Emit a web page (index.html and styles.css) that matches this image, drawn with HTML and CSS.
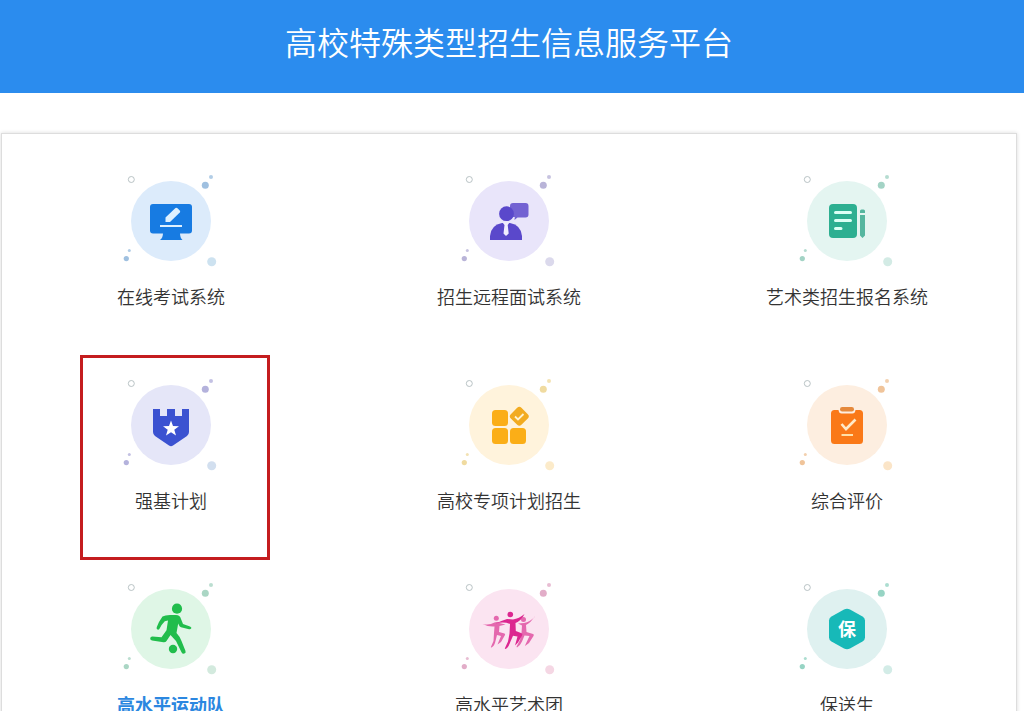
FILE: index.html
```html
<!DOCTYPE html>
<html lang="zh-CN">
<head>
    <meta charset="UTF-8">
    <meta name="viewport" content="width=device-width, initial-scale=1.0">
    <title>高校特殊类型招生信息服务平台</title>
    <link rel="stylesheet" href="styles.css">
</head>
<body>
    <svg class="defs" width="0" height="0" aria-hidden="true">
        <!-- small dots around every icon -->
        <symbol id="dots" viewBox="0 0 100 100">
            <circle cx="10.3" cy="8.5" r="3" fill="none" stroke="#a9b5b8" stroke-width="1" opacity=".8"/>
            <circle cx="84.3" cy="14.3" r="3.5" fill="currentColor"/>
            <circle cx="90" cy="6" r="2" fill="currentColor" opacity=".8"/>
            <circle cx="8.3" cy="79.5" r="1.5" fill="currentColor" opacity=".8"/>
            <circle cx="5.3" cy="87.6" r="2.6" fill="currentColor"/>
        </symbol>
    </svg>

    <header class="header">
        <h1>高校特殊类型招生信息服务平台</h1>
    </header>

    <main class="card">
        <a class="item" href="#">
            <svg class="icon blue" viewBox="0 0 100 100" aria-hidden="true">
                <use href="#dots"/>
                <circle cx="90.7" cy="90.7" r="4.5" fill="#cde2f0"/>
                <circle cx="50" cy="50" r="40" fill="#dcebfb"/>
                <rect x="29" y="33" width="42" height="29.5" rx="3" fill="#177be2"/>
                <path d="M42 62h17q0 5 2.5 7H39q3-2 3-7z" fill="#177be2"/>
                <path d="M39 55h22" stroke="#dff1ff" stroke-width="2"/>
                <path d="M44.5 46.500l10-9.500q1-.7 2 .2l2.200 2.200q1 1 .1 2L49 51h-4.500z" fill="#dff1ff"/>
            </svg>
            <span class="name">在线考试系统</span>
        </a>
        <a class="item" href="#">
            <svg class="icon violet" viewBox="0 0 100 100" aria-hidden="true">
                <use href="#dots"/>
                <circle cx="90.7" cy="90.7" r="4.5" fill="#dbd9ec"/>
                <circle cx="50" cy="50" r="40" fill="#e9e5fa"/>
                <path d="M54 32h12.500q3 0 3 3v8.500q0 3-3 3h-8l-3 2.500.3-3H51V35q0-3 3-3z" fill="#7362d2"/>
                <circle cx="47.5" cy="42.7" r="7.4" fill="#5a48cb"/>
                <path d="M31 69v-4q1-11 12-13h8q11 2 12 13v4z" fill="#5a48cb"/>
                <path d="M43.5 51.500h7L48.700 54l1 8.500L47 65l-2.500-2.500 1-8.500z" fill="#f1edff"/>
            </svg>
            <span class="name">招生远程面试系统</span>
        </a>
        <a class="item" href="#">
            <svg class="icon green" viewBox="0 0 100 100" aria-hidden="true">
                <use href="#dots"/>
                <circle cx="90.7" cy="90.7" r="4.5" fill="#d3ebe5"/>
                <circle cx="50" cy="50" r="40" fill="#e4f5f1"/>
                <rect x="32" y="33" width="28" height="34" rx="4" fill="#2daf91"/>
                <path d="M38.5 41.500h15M38.500 49.500h15M38.500 57.500h5.500" stroke="#dcfff5" stroke-width="3" stroke-linecap="round"/>
                <path d="M63 42v-2q0-1.500 1.500-1.500h2q1.500 0 1.500 1.500v2zM63 44h5v20.500L65.500 67 63 64.500z" fill="#55b69f"/>
            </svg>
            <span class="name">艺术类招生报名系统</span>
        </a>

        <a class="item marked" href="#">
            <svg class="icon indigo" viewBox="0 0 100 100" aria-hidden="true">
                <use href="#dots"/>
                <circle cx="90.7" cy="90.7" r="4.5" fill="#d2dfef"/>
                <circle cx="50" cy="50" r="40" fill="#e5e6f8"/>
                <path d="M32 34h7v7h7v-7h8v7h7v-7h7v23q0 2.500-2 4L52 70.500q-2 1.500-4 0L34 61q-2-1.500-2-4z" fill="#3b52d1"/>
                <path d="M50 45.500l2 5.500 6 .2-4.700 3.600 1.700 5.700-5-3.300-5 3.300 1.700-5.700L42 51.200l6-.2z" fill="#fff"/>
            </svg>
            <span class="name">强基计划</span>
        </a>
        <a class="item" href="#">
            <svg class="icon yellow" viewBox="0 0 100 100" aria-hidden="true">
                <use href="#dots"/>
                <circle cx="90.7" cy="90.7" r="4.5" fill="#fcebca"/>
                <circle cx="50" cy="50" r="40" fill="#fff3dc"/>
                <g fill="#fbae17">
                    <rect x="33" y="35" width="16" height="16" rx="3.5"/>
                    <rect x="33" y="53" width="16" height="16" rx="3.5"/>
                    <rect x="51" y="53" width="16" height="16" rx="3.5"/>
                    <rect x="52.8" y="33.8" width="15" height="15" rx="3" transform="rotate(45 60.3 41.3)" fill="#f2ab20"/>
                </g>
                <path d="M56 41.500l3 3 5.500-5.500" fill="none" stroke="#fff3d0" stroke-width="1.8"/>
            </svg>
            <span class="name">高校专项计划招生</span>
        </a>
        <a class="item" href="#">
            <svg class="icon orange" viewBox="0 0 100 100" aria-hidden="true">
                <use href="#dots"/>
                <circle cx="90.7" cy="90.7" r="4.5" fill="#fbe5c8"/>
                <circle cx="50" cy="50" r="40" fill="#fdeee0"/>
                <path d="M37.5 35h4q.5 3.500 3 3.500h11q2.500 0 3-3.500h4q3.500 0 3.500 3.500v27q0 3.500-3.500 3.500h-25q-3.500 0-3.500-3.500v-27q0-3.500 3.500-3.500z" fill="#fa7918"/>
                <rect x="43" y="32" width="14" height="4.5" rx="2.2" fill="#e5893c"/>
                <path d="M44.5 49l4.500 5 9.500-9.500" fill="none" stroke="#ffe9c8" stroke-width="2.6"/>
                <path d="M44.5 60h11.500" stroke="#ffe0a8" stroke-width="2"/>
            </svg>
            <span class="name">综合评价</span>
        </a>

        <a class="item current" href="#">
            <svg class="icon grass" viewBox="0 0 100 100" aria-hidden="true">
                <use href="#dots"/>
                <circle cx="90.7" cy="90.7" r="4.5" fill="#d3eade"/>
                <circle cx="50" cy="50" r="40" fill="#dff6e6"/>
                <g fill="#21bd4c">
                    <circle cx="56" cy="29.7" r="5.1"/>
                    <circle cx="52" cy="70" r="4.2"/>
                    <path d="M41.5 37.500Q44 36 49 36h6q4 0 5 4l2 5 7 2.500q2 .8 1.200 2-.7 1-2.200.7l-8-2q-1.500-.5-2-2l-.8-1.700-1.700 9.500q3 3 5 8l4 10q.7 2-1.200 2.600-1.800.6-2.800-1.400L55 62l-5.500-6-4 6q-1 1.500-3 1.300L31 61.500q-2-.3-1.800-2.200.2-1.900 2.300-1.800l9 .7 5-7 1.500-9.700-3.200.7q-3.300 3.300-5 7-.8 2-2.300 1.300-1.500-.8-.7-2.500 2-5.500 5.700-10.500z"/>
                </g>
            </svg>
            <span class="name">高水平运动队</span>
        </a>
        <a class="item" href="#">
            <svg class="icon pink" viewBox="0 0 100 100" aria-hidden="true">
                <use href="#dots"/>
                <circle cx="90.7" cy="90.7" r="4.5" fill="#f5d7e4"/>
                <circle cx="50" cy="50" r="40" fill="#fbe4f1"/>
                <!-- three dancers, the middle one in front -->
                <g fill="#e468ae">
                    <circle cx="37.3" cy="39.2" r="2.5"/>
                    <path d="M23.5 45q7 1.500 12-1.500 3-1 5 .5l6 1.500-6 1.500-.5 6 5.500 1.500q1 .5.500 1.500L42 63l-3.500 2.500L42 57l-4-1-1.500 6q-1 5-4 6.500-1 .3-.5-.7l2.500-5.800.5-8 .5-6.500q-6 .5-12-2.500z"/>
                    <circle cx="64.5" cy="40.5" r="2.5"/>
                    <path d="M75.500 37.500q-3.500 6-8.500 8.500l.5 7 6.500 2q1.500.5.500 2L70 64l-4 3 .5-1.500 4-8.500-5-.5-2.500 6q-2 4.500-5 6l-.5-.8 3.500-6.700 1.500-7 .5-7.500-4-2 6-.5q6-1 10.500-6z"/>
                </g>
                <g fill="#dc2790">
                    <circle cx="51.3" cy="35.5" r="2.8"/>
                    <path d="M36.5 44.500q6-3 11.500-4.500l6 .5q6-1 11.500-5.500-3 6.500-9 9l.3 8 5.200 2q2 .7 1 2.500L59 63.500l-3 3 2.500-9-4.500-.8-2.500 5.800q-2 6-5 7.500-1 0-.5-1l3-6.500 1.500-8 .5-9.500q-6-2.500-14.500-.5z"/>
                </g>
            </svg>
            <span class="name">高水平艺术团</span>
        </a>
        <a class="item" href="#">
            <svg class="icon teal" viewBox="0 0 100 100" aria-hidden="true">
                <use href="#dots"/>
                <circle cx="90.7" cy="90.7" r="4.5" fill="#d3ece7"/>
                <circle cx="50" cy="50" r="40" fill="#dff1f0"/>
                <path d="M47 30.500q3-1.500 6 0L65.500 37.500q2.500 1.500 2.500 4v17q0 2.500-2.500 4L53 69.500q-3 1.500-6 0L34.500 62.500q-2.500-1.500-2.500-4v-17q0-2.500 2.500-4z" fill="#17b9b8"/>
                <text class="glyph" x="50" y="57" text-anchor="middle">保</text>
            </svg>
            <span class="name">保送生</span>
        </a>
    </main>
</body>
</html>
```
FILE: styles.css
```css
html{
    scrollbar-width: none;
}

body{
    margin: 0;
    background-color: #fff;
    color: #333;
    font-family: "Noto Sans CJK SC", sans-serif;
}

.defs{
    display: block;
}

.header{
    background-color: #2b8cee;
    padding: 17px 6px 28px 0;
}

.header h1{
    margin: 0;
    font-size: 32px;
    line-height: 48px;
    font-weight: 350;
    text-align: center;
    color: #fff;
}

.card{
    display: grid;
    grid-template-columns: repeat(3, 1fr);
    margin: 40px 7px 0 1px;
    padding-top: 37px;
    border: 1px solid #ddd;
    box-shadow: 0 0 4px rgba(0, 0, 0, 0.15);
}

.item{
    position: relative;
    display: flex;
    flex-direction: column;
    align-items: center;
    gap: 13px;
    padding-bottom: 67px;
    color: #333;
    text-decoration: none;
}

.icon{
    width: 100px;
    height: 100px;
}

.name{
    font-size: 18px;
    font-weight: 350;
    line-height: 24px;
}

.current .name{
    color: #2b87e0;
    font-weight: bold;
}

/* red frame around the selected plan */
.marked::after{
    content: "";
    position: absolute;
    top: -20px;
    left: 50%;
    width: 184px;
    height: 199px;
    margin-left: -91px;
    border: 3px solid #c41d1f;
}

.glyph{
    font-size: 18px;
    font-weight: bold;
    fill: #fff;
}

.blue{ color: #9fc0e0; }
.violet{ color: #b9b4d8; }
.green{ color: #a3d3c5; }
.indigo{ color: #b4b2dc; }
.yellow{ color: #f0dba0; }
.orange{ color: #f0c49a; }
.grass{ color: #aad6c4; }
.pink{ color: #e2adc8; }
.teal{ color: #97d4c4; }
```
